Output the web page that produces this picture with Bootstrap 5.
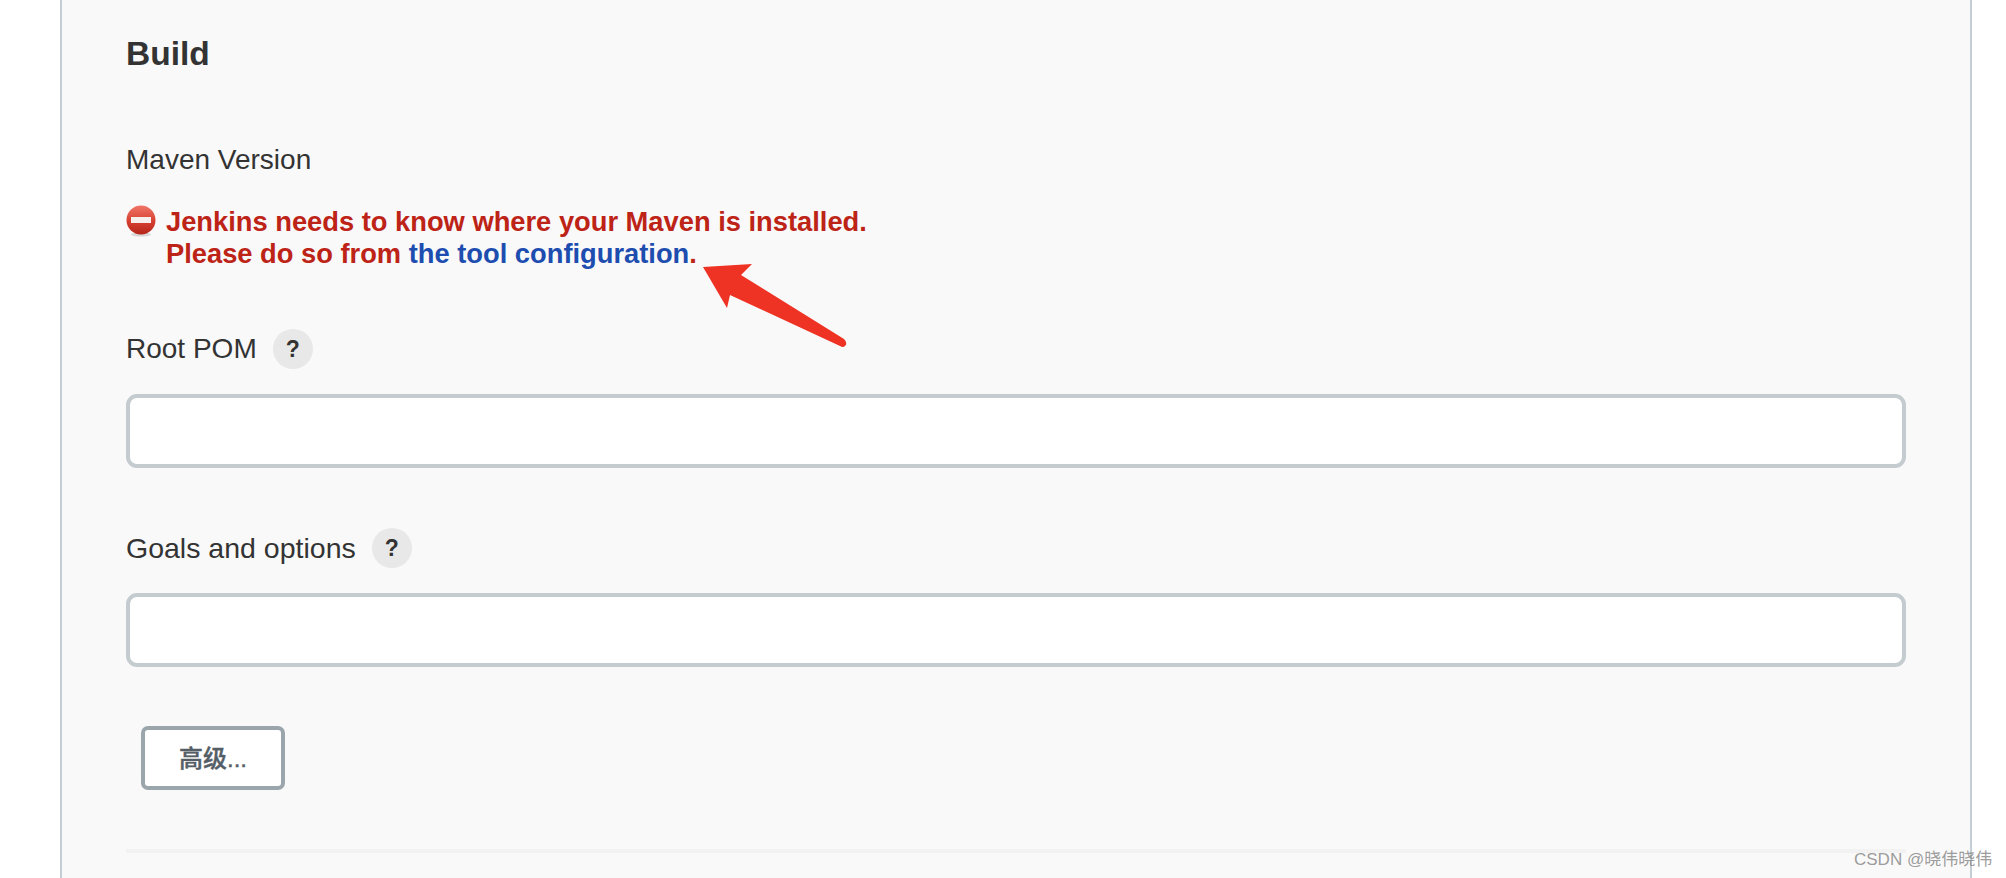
<!DOCTYPE html>
<html lang="en">

<head>
    <meta charset="UTF-8">
    <meta name="viewport" content="width=device-width, initial-scale=1.0">
    <title>Build - Jenkins</title>
    <link href="https://cdn.jsdelivr.net/npm/bootstrap@5.3.2/dist/css/bootstrap.min.css" rel="stylesheet">
    <style>
        body {
            font-family: "Liberation Sans", "Noto Sans CJK SC", sans-serif;
            background: #fff;
            color: #333;
            overflow: hidden;
        }

        .config-panel {
            position: relative;
            width: 1912px;
            height: 878px;
            margin-left: 60px;
            padding: 34px 64px 0;
            background: #f9f9f9;
            border-left: 2px solid #c5ced3;
            border-right: 2px solid #c5ced3;
            overflow: hidden;
        }

        .section-title {
            font-size: 33.5px;
            line-height: 40px;
            font-weight: 700;
            color: #333;
            margin: 0 0 70px;
        }

        .field-label {
            font-size: 28px;
            line-height: 32px;
            color: #333;
            margin: 0;
        }

        .field-label.wide-label {
            font-size: 28.5px;
        }

        .error-msg {
            font-size: 27.3px;
            line-height: 32px;
            font-weight: 700;
            color: #bd2316;
            margin: 30px 0 59px;
            padding-left: 40px;
            position: relative;
        }

        .error-msg a {
            color: #1e4db0;
            text-decoration: none;
        }

        .error-icon {
            position: absolute;
            left: 0;
            top: -2px;
            width: 32px;
            height: 34px;
        }

        .help-btn {
            width: 40px;
            height: 40px;
            margin-left: 16px;
            padding: 0;
            border: 0;
            border-radius: 50%;
            background: #e8e8e8;
            color: #333;
            font-size: 23px;
            font-weight: 700;
            line-height: 40px;
        }

        .field-row {
            height: 40px;
            margin-bottom: 25px;
        }

        .form-control.field-input {
            height: 74px;
            border: 4px solid #c4ccd0;
            border-radius: 11px;
            background: #fff;
            margin-bottom: 60px;
        }

        .form-control.field-input.last-input {
            margin-bottom: 59px;
        }

        .btn.advanced-btn {
            display: block;
            width: 144px;
            height: 64px;
            margin-left: 15px;
            padding: 0;
            background: #fff;
            border: 4px solid #9aa5ac;
            border-radius: 7px;
            color: #555e66;
            font-size: 24px;
            font-weight: 500;
            line-height: 58px;
            -webkit-text-stroke: .4px #555e66;
        }

        .section-rule {
            height: 4px;
            margin: 59px 0 0;
            border: 0;
            background: #f2f2f2;
            opacity: 1;
        }

        .red-arrow {
            position: absolute;
            left: 578px;
            top: 0;
            width: 300px;
            height: 400px;
        }

        .watermark {
            position: absolute;
            left: 1854px;
            top: 848px;
            font-size: 17px;
            line-height: 24px;
            color: rgba(130, 130, 130, .8);
            white-space: nowrap;
        }
    </style>
</head>

<body>
    <div class="config-panel">
        <h2 class="section-title">Build</h2>

        <p class="field-label">Maven Version</p>
        <div class="error-msg">
            <svg class="error-icon" viewBox="0 0 32 34" aria-hidden="true">
                <defs>
                    <linearGradient id="stopFill" x1="0" y1="0" x2="0" y2="1">
                        <stop offset="0" stop-color="#f0766a" />
                        <stop offset="0.55" stop-color="#d63f30" />
                        <stop offset="1" stop-color="#b5261b" />
                    </linearGradient>
                </defs>
                <ellipse cx="15" cy="30.5" rx="10" ry="2" fill="#d8d8d8" />
                <circle cx="15" cy="16" r="14.5" fill="url(#stopFill)" />
                <rect x="5" y="13" width="20" height="6" fill="#f6efed" />
            </svg>
            Jenkins needs to know where your Maven is installed.<br>
            Please do so from <a href="#">the tool configuration</a>.
        </div>

        <div class="field-row d-flex align-items-center">
            <label class="field-label" for="rootPom">Root POM</label>
            <button type="button" class="help-btn">?</button>
        </div>
        <input type="text" id="rootPom" class="form-control field-input">

        <div class="field-row d-flex align-items-center">
            <label class="field-label wide-label" for="goals">Goals and options</label>
            <button type="button" class="help-btn">?</button>
        </div>
        <input type="text" id="goals" class="form-control field-input last-input">

        <button type="button" class="btn advanced-btn">高级...</button>
        <hr class="section-rule">

        <!-- annotation drawn over the form -->
        <svg class="red-arrow" viewBox="640 0 300 400" aria-hidden="true">
            <path d="M703 267 L752 264 L741 275 L844 339 Q848 343 845 346 Q843 348 840 346 L730 295 L727 308 Z" fill="#ee3224" />
        </svg>
    </div>
    <div class="watermark">CSDN @晓伟晓伟</div>

    <script src="https://cdn.jsdelivr.net/npm/bootstrap@5.3.2/dist/js/bootstrap.bundle.min.js"></script>
</body>

</html>
